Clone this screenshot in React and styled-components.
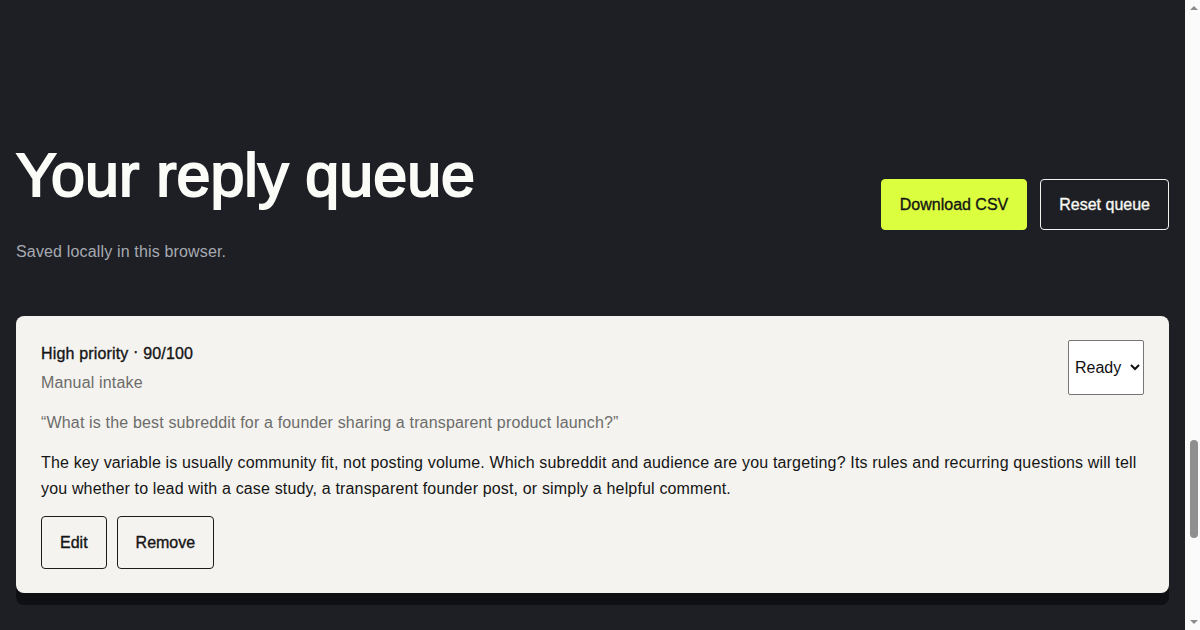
import React, { useState } from "react";
import styled, { createGlobalStyle } from "styled-components";

const GlobalStyle = createGlobalStyle`
  html, body {
    margin: 0;
    background: #1d1f24;
  }
  body {
    font-family: "Liberation Sans", Arial, sans-serif;
    letter-spacing: 0.01em;
    color: #f5f5f2;
  }
  * {
    box-sizing: border-box;
  }
`;

const queueItems = [
  {
    id: 1,
    priority: "High priority",
    score: 90,
    source: "Manual intake",
    question:
      "What is the best subreddit for a founder sharing a transparent product launch?",
    reply:
      "The key variable is usually community fit, not posting volume. Which subreddit and audience are you targeting? Its rules and recurring questions will tell you whether to lead with a case study, a transparent founder post, or simply a helpful comment.",
    status: "Ready",
  },
];

const App = () => {
  const [items, setItems] = useState(queueItems);

  return (
    <Shell>
      <GlobalStyle />
      <Page>
        <Header>
          <div>
            <Title>Your reply queue</Title>
            <Subtitle>Saved locally in this browser.</Subtitle>
          </div>
          <HeaderActions>
            <Button $variant="primary">Download CSV</Button>
            <Button $variant="ghost" onClick={() => setItems(queueItems)}>
              Reset queue
            </Button>
          </HeaderActions>
        </Header>

        <QueueList>
          {items.map((item) => (
            <Card key={item.id}>
              <CardTop>
                <div>
                  <Meta>
                    {item.priority} <Dot>·</Dot> {item.score}/100
                  </Meta>
                  <Source>{item.source}</Source>
                </div>
                <StatusSelect defaultValue={item.status}>
                  <option>Draft</option>
                  <option>Ready</option>
                  <option>Posted</option>
                </StatusSelect>
              </CardTop>
              <Question>“{item.question}”</Question>
              <Reply>{item.reply}</Reply>
              <CardActions>
                <Button $variant="outline">Edit</Button>
                <Button
                  $variant="outline"
                  onClick={() =>
                    setItems((prev) => prev.filter((i) => i.id !== item.id))
                  }
                >
                  Remove
                </Button>
              </CardActions>
            </Card>
          ))}
        </QueueList>
      </Page>

      <ScrollRail aria-hidden="true">
        <RailArrow $dir="up" />
        <RailThumb />
        <RailArrow $dir="down" />
      </ScrollRail>
    </Shell>
  );
};

export default App;

const Shell = styled.div`
  display: flex;
  height: 100vh;
  overflow: hidden;
`;

const Page = styled.main`
  flex: 1;
  min-width: 0;
  padding: 145px 16px 40px;
`;

// page scrollbar as seen in the screenshot
const ScrollRail = styled.div`
  width: 15px;
  flex-shrink: 0;
  display: flex;
  flex-direction: column;
  align-items: center;
  background: #fbfbfb;
  padding: 6px 0 6px 2px;
`;

const RailArrow = styled.span`
  width: 0;
  height: 0;
  border-left: 4px solid transparent;
  border-right: 4px solid transparent;
  ${(p) =>
    p.$dir === "up"
      ? "border-bottom: 4px solid #8c8c8c;"
      : "border-top: 4px solid #8c8c8c; margin-top: auto;"}
`;

const RailThumb = styled.span`
  width: 8px;
  height: 98px;
  margin-top: 430px;
  border-radius: 4px;
  background: #8f8f8f;
`;

const Header = styled.header`
  display: flex;
  align-items: center;
  justify-content: space-between;
  margin-bottom: 52px;
`;

const Title = styled.h1`
  margin: 0 0 34px;
  font-size: 61px;
  line-height: 1;
  font-weight: 400;
  letter-spacing: 0;
  color: #fbfbf8;
  -webkit-text-stroke: 2px #fbfbf8;
`;

const Subtitle = styled.p`
  margin: 0;
  font-size: 16px;
  line-height: 1.5;
  color: #a7aab1;
`;

const HeaderActions = styled.div`
  display: flex;
  gap: 13px;
`;

const Button = styled.button`
  display: inline-flex;
  align-items: center;
  justify-content: center;
  height: ${(p) => (p.$variant === "outline" ? "53px" : "51px")};
  padding: 0 18px;
  border-radius: 4px;
  font-family: inherit;
  font-size: 16px;
  letter-spacing: 0;
  font-weight: 400;
  -webkit-text-stroke: 0.35px currentColor;
  cursor: pointer;
  border: 1px solid
    ${(p) =>
      p.$variant === "primary"
        ? "#dbff3f"
        : p.$variant === "ghost"
        ? "#f3f3ef"
        : "#1c1c1c"};
  background: ${(p) => (p.$variant === "primary" ? "#dbff3f" : "transparent")};
  color: ${(p) => (p.$variant === "ghost" ? "#f7f7f3" : "#151515")};
`;

const QueueList = styled.section`
  display: flex;
  flex-direction: column;
  gap: 24px;
`;

const Card = styled.article`
  background: #f4f3ef;
  border-radius: 8px;
  padding: 24px 25px;
  color: #151515;
  box-shadow: 0 12px 0 #0f1013;
`;

const CardTop = styled.div`
  display: flex;
  justify-content: space-between;
  align-items: flex-start;
`;

const Meta = styled.p`
  margin: 0;
  font-size: 16px;
  line-height: 1.5;
  font-weight: 400;
  -webkit-text-stroke: 0.35px #151515;
`;

const Dot = styled.span`
  vertical-align: 2px;
`;

const Source = styled.p`
  margin: 5px 0 0;
  font-size: 16px;
  line-height: 1.5;
  color: #6c6c6a;
`;

const StatusSelect = styled.select`
  height: 55px;
  padding: 0 2px;
  font-family: inherit;
  font-size: 16px;
  color: #111;
  background: #fff;
  border: 1px solid #767676;
  border-radius: 2px;
`;

const Question = styled.p`
  margin: 16px 0 0;
  font-size: 16px;
  line-height: 1.5;
  color: #6c6c6a;
`;

const Reply = styled.p`
  margin: 15px 0 0;
  font-size: 16px;
  line-height: 1.6;
  color: #151515;
`;

const CardActions = styled.div`
  display: flex;
  gap: 10px;
  margin-top: 15px;
`;
